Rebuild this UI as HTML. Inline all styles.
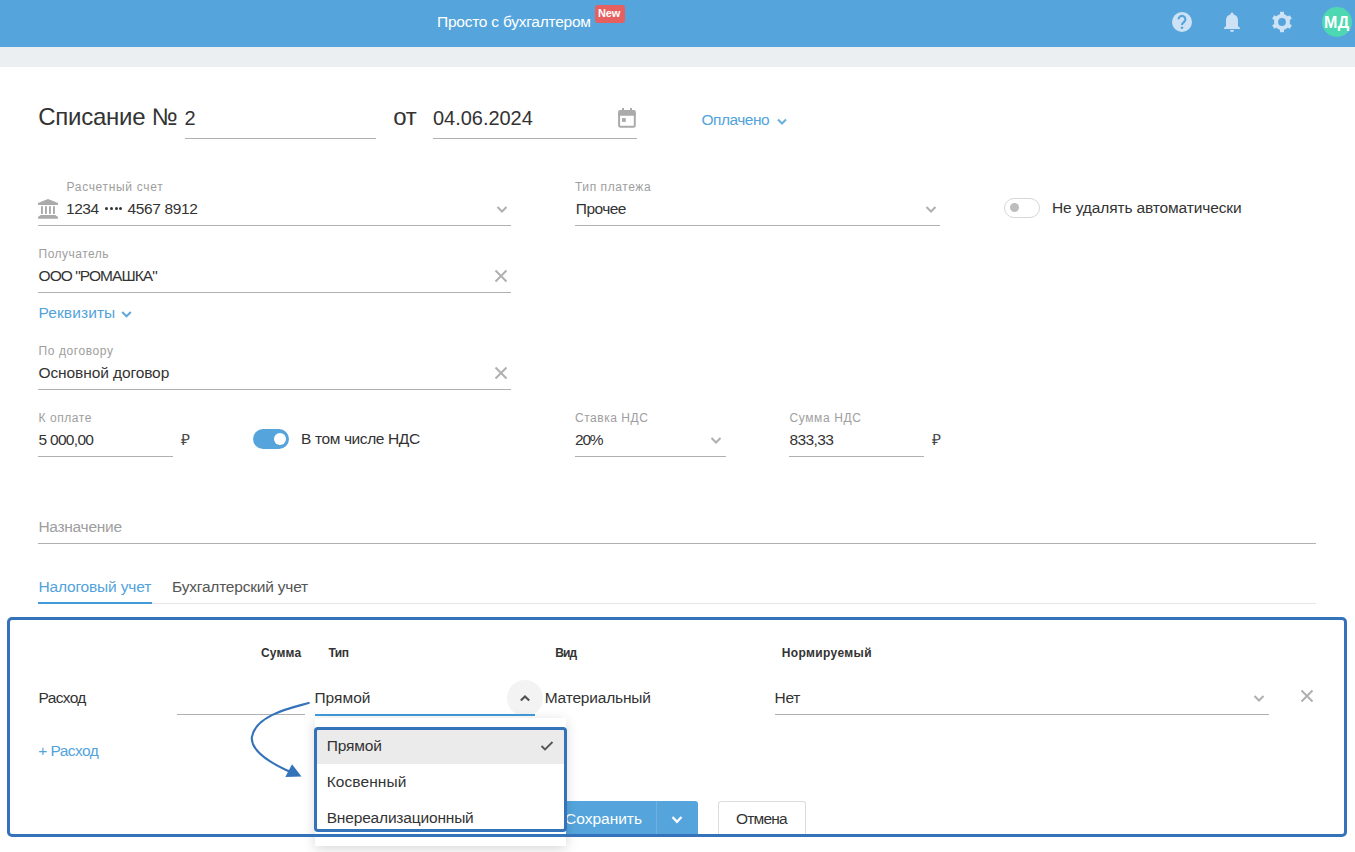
<!DOCTYPE html>
<html><head><meta charset="utf-8"><style>
*{margin:0;padding:0;box-sizing:border-box}
html,body{width:1355px;height:852px;overflow:hidden;background:#fff;font-family:"Liberation Sans",sans-serif}
.t{position:absolute;white-space:nowrap}
.a{position:absolute}
.ul{position:absolute;height:1px;background:#b0b0b0}
</style></head>
<body>

<div class="a" style="left:0;top:0;width:1355px;height:47px;background:#55a5dc"></div>
<div class="a" style="left:0;top:47px;width:1355px;height:20px;background:#eceff1"></div>
<div class="a" style="left:595px;top:5px;width:30px;height:18px;background:#e5605f;border-radius:3px"></div>
<div class="t" style="left:598px;top:7px;font-size:11px;line-height:12px;color:#fff;font-weight:bold;letter-spacing:-0.2px">New</div>

<!-- underlines row1 -->
<div class="ul" style="left:185px;top:138px;width:191px"></div>
<div class="ul" style="left:433px;top:138px;width:204px"></div>
<!-- row2 -->
<div class="ul" style="left:38px;top:225px;width:473px"></div>
<div class="ul" style="left:575px;top:225px;width:365px"></div>
<div class="ul" style="left:38px;top:292px;width:473px"></div>
<div class="ul" style="left:38px;top:389px;width:473px"></div>
<div class="ul" style="left:38px;top:456px;width:135px"></div>
<div class="ul" style="left:575px;top:456px;width:151px"></div>
<div class="ul" style="left:789px;top:456px;width:135px"></div>
<div class="ul" style="left:38px;top:543px;width:1278px"></div>
<!-- tabs -->
<div class="a" style="left:152px;top:603px;width:1164px;height:1px;background:#e6e6e6"></div>
<div class="a" style="left:38px;top:602px;width:114px;height:2px;background:#409bd8"></div>
<!-- table underlines -->
<div class="a" style="left:507px;top:680px;width:36px;height:36px;border-radius:50%;background:#f3f3f3"></div>
<div class="ul" style="left:177px;top:714px;width:128px"></div>
<div class="a" style="left:315px;top:714px;width:220px;height:2px;background:#409bd8"></div>
<div class="ul" style="left:775px;top:714px;width:494px"></div>
<!-- toggles -->
<div class="a" style="left:1004px;top:198px;width:36px;height:20px;border:1px solid #d6d6d6;border-radius:10px"></div>
<div class="a" style="left:1010px;top:203px;width:9px;height:9px;border-radius:50%;background:#bdbdbd"></div>
<div class="a" style="left:253px;top:429px;width:36px;height:20px;border-radius:10px;background:#55a5dc"></div>
<div class="a" style="left:274px;top:433px;width:12px;height:12px;border-radius:50%;background:#fff"></div>
<!-- buttons -->
<div class="a" style="left:540px;top:801px;width:158px;height:35px;background:#55a5dc;border-radius:3px 3px 0 0"></div>
<div class="a" style="left:656px;top:801px;width:1px;height:35px;background:#6db1e2"></div>
<div class="a" style="left:718px;top:801px;width:88px;height:35px;border:1px solid #dcdcdc;border-bottom:none;border-radius:3px 3px 0 0;background:#fff"></div>



<div class="a" style="left:104.5px;top:207px;width:3px;height:3px;border-radius:50%;background:#333"></div><div class="a" style="left:109.5px;top:207px;width:3px;height:3px;border-radius:50%;background:#333"></div><div class="a" style="left:114.5px;top:207px;width:3px;height:3px;border-radius:50%;background:#333"></div><div class="a" style="left:119.4px;top:207px;width:3px;height:3px;border-radius:50%;background:#333"></div>
<!-- chevrons -->
<svg class="a" style="left:776px;top:116px" width="12" height="10" viewBox="0 0 12 10"><path d="M2 3.5 L6 7.5 L10 3.5" fill="none" stroke="#6bb0d8" stroke-width="2.1"/></svg>
<svg class="a" style="left:121px;top:309px" width="11" height="10" viewBox="0 0 11 10"><path d="M1.2 3 L5.5 7.2 L9.8 3" fill="none" stroke="#62a8db" stroke-width="2.1"/></svg>
<svg class="a" style="left:495.5px;top:203.7px" width="12" height="10" viewBox="0 0 12 10"><path d="M1.5 3 L6 7.5 L10.5 3" fill="none" stroke="#b0b0b0" stroke-width="2.1"/></svg>
<svg class="a" style="left:925px;top:204px" width="12" height="10" viewBox="0 0 12 10"><path d="M1.5 3 L6 7.5 L10.5 3" fill="none" stroke="#b0b0b0" stroke-width="2.1"/></svg>
<svg class="a" style="left:710px;top:435.2px" width="12" height="10" viewBox="0 0 12 10"><path d="M1.5 3 L6 7.5 L10.5 3" fill="none" stroke="#b0b0b0" stroke-width="2.1"/></svg>
<svg class="a" style="left:1253px;top:693px" width="12" height="10" viewBox="0 0 12 10"><path d="M1.5 3 L6 7.5 L10.5 3" fill="none" stroke="#b0b0b0" stroke-width="2.1"/></svg>
<svg class="a" style="left:519px;top:692.5px" width="12" height="10" viewBox="0 0 12 10"><path d="M1.8 7.6 L6 3.4 L10.2 7.6" fill="none" stroke="#505050" stroke-width="2.1"/></svg>
<svg class="a" style="left:671px;top:813.5px" width="12" height="10" viewBox="0 0 12 10"><path d="M1.5 3 L6 7.8 L10.5 3" fill="none" stroke="#fff" stroke-width="2.3"/></svg>
<!-- X icons -->
<svg class="a" style="left:494px;top:269px" width="14" height="14" viewBox="0 0 14 14"><path d="M1.5 1.5 L12.5 12.5 M12.5 1.5 L1.5 12.5" stroke="#b0b0b0" stroke-width="2"/></svg>
<svg class="a" style="left:494px;top:366px" width="14" height="14" viewBox="0 0 14 14"><path d="M1.5 1.5 L12.5 12.5 M12.5 1.5 L1.5 12.5" stroke="#b0b0b0" stroke-width="2"/></svg>
<svg class="a" style="left:1300px;top:689px" width="14" height="14" viewBox="0 0 14 14"><path d="M1.5 1.5 L12.5 12.5 M12.5 1.5 L1.5 12.5" stroke="#b0b0b0" stroke-width="2"/></svg>
<!-- calendar -->
<svg class="a" style="left:617px;top:108px" width="20" height="21" viewBox="0 0 20 21"><g fill="#aaaaaa"><rect x="5" y="0" width="2" height="3"/><rect x="13" y="0" width="2" height="3"/><path d="M3.1 2.1 H16.8 A2 2 0 0 1 18.8 4.1 V7.7 H1.1 V4.1 A2 2 0 0 1 3.1 2.1 Z"/><rect x="5" y="10.1" width="3.8" height="3.8"/></g><path d="M2.1 5 V17.2 A1.5 1.5 0 0 0 3.6 18.7 H16.3 A1.5 1.5 0 0 0 17.8 17.2 V5" fill="none" stroke="#aaaaaa" stroke-width="2"/></svg>
<!-- bank -->
<svg class="a" style="left:34px;top:195px" width="28" height="28" viewBox="0 0 28 28"><g fill="#aaaaaa"><path d="M4 8 L14 4 L24 8 V10 H4 Z"/><rect x="7" y="11.2" width="1.9" height="7.7"/><rect x="11" y="11.2" width="1.9" height="7.7"/><rect x="15" y="11.2" width="1.9" height="7.7"/><rect x="19" y="11.2" width="1.9" height="7.7"/><path d="M6.7 20 H21.2 L24 22 V23.7 H4 V22 Z"/></g></svg>
<!-- header icons -->
<svg class="a" style="left:1171px;top:11px" width="22" height="22" viewBox="0 0 22 22"><circle cx="11" cy="11" r="10" fill="#cde2f4"/><path d="M7.6 8.3 a3.4 3.4 0 1 1 5.4 2.7 c-1.2 0.9 -2 1.4 -2 3" fill="none" stroke="#55a5dc" stroke-width="2.2"/><circle cx="11" cy="16.8" r="1.3" fill="#55a5dc"/></svg>
<svg class="a" style="left:1222px;top:11px" width="20" height="22" viewBox="0 0 20 22"><path d="M10 1.5 a1.5 1.5 0 0 1 1.5 1.5 v0.6 a6 6 0 0 1 4.5 5.8 v5.6 l2 2 v1 H2 v-1 l2 -2 v-5.6 a6 6 0 0 1 4.5 -5.8 v-0.6 A1.5 1.5 0 0 1 10 1.5 Z" fill="#cde2f4"/><path d="M8 19 h4 a2 2 0 0 1 -4 0 Z" fill="#cde2f4"/></svg>
<svg class="a" style="left:1270px;top:10px" width="24" height="24" viewBox="-12 -12 24 24"><g fill="#cde2f4"><circle r="8"/><rect x="-2" y="-10.2" width="4" height="4" transform="rotate(0)"/><rect x="-2" y="-10.2" width="4" height="4" transform="rotate(60)"/><rect x="-2" y="-10.2" width="4" height="4" transform="rotate(120)"/><rect x="-2" y="-10.2" width="4" height="4" transform="rotate(180)"/><rect x="-2" y="-10.2" width="4" height="4" transform="rotate(240)"/><rect x="-2" y="-10.2" width="4" height="4" transform="rotate(300)"/></g><circle r="3.9" fill="#55a5dc"/></svg>
<div class="a" style="left:1322px;top:7px;width:30px;height:30px;border-radius:50%;background:#4ed8b1"></div>
<div class="t" style="left:1324px;top:14.8px;font-size:16px;line-height:16px;color:#fff;font-weight:bold;letter-spacing:0.3px">МД</div>

<div id="h_title" class="t" style="left:437.00px;top:13.88px;font-size:15.5px;line-height:15.5px;color:#ffffff;letter-spacing:-0.237px;">Просто с бухгалтером</div>
<div id="t_spis" class="t" style="left:38.20px;top:104.68px;font-size:24px;line-height:24px;color:#333333;letter-spacing:-0.256px;">Списание №</div>
<div id="t_num" class="t" style="left:184.60px;top:108.07px;font-size:20px;line-height:20px;color:#333333;">2</div>
<div id="t_ot" class="t" style="left:393.20px;top:104.68px;font-size:24px;line-height:24px;color:#333333;letter-spacing:-0.200px;">от</div>
<div id="t_date" class="t" style="left:433.00px;top:108.07px;font-size:20px;line-height:20px;color:#333333;letter-spacing:-0.033px;">04.06.2024</div>
<div id="t_paid" class="t" style="left:701.60px;top:111.88px;font-size:15.5px;line-height:15.5px;color:#52a3dc;letter-spacing:-0.529px;">Оплачено</div>
<div id="l_acc" class="t" style="left:66.50px;top:180.84px;font-size:12px;line-height:12px;color:#9e9e9e;letter-spacing:0.677px;">Расчетный счет</div>
<div id="l_type" class="t" style="left:575.00px;top:180.84px;font-size:12px;line-height:12px;color:#9e9e9e;letter-spacing:0.570px;">Тип платежа</div>
<div id="l_rec" class="t" style="left:38.50px;top:247.84px;font-size:12px;line-height:12px;color:#9e9e9e;letter-spacing:0.500px;">Получатель</div>
<div id="l_dog" class="t" style="left:38.50px;top:344.84px;font-size:12px;line-height:12px;color:#9e9e9e;letter-spacing:0.590px;">По договору</div>
<div id="l_pay" class="t" style="left:38.50px;top:411.84px;font-size:12px;line-height:12px;color:#9e9e9e;letter-spacing:0.571px;">К оплате</div>
<div id="l_rate" class="t" style="left:575.00px;top:411.84px;font-size:12px;line-height:12px;color:#9e9e9e;letter-spacing:0.533px;">Ставка НДС</div>
<div id="l_sum" class="t" style="left:789.50px;top:411.84px;font-size:12px;line-height:12px;color:#9e9e9e;letter-spacing:0.600px;">Сумма НДС</div>
<div id="v_acc1" class="t" style="left:66.10px;top:200.88px;font-size:15.5px;line-height:15.5px;color:#333333;letter-spacing:-0.500px;">1234</div>
<div id="v_acc2" class="t" style="left:127.40px;top:200.88px;font-size:15.5px;line-height:15.5px;color:#333333;letter-spacing:-0.338px;">4567 8912</div>
<div id="v_type" class="t" style="left:575.80px;top:200.88px;font-size:15.5px;line-height:15.5px;color:#333333;letter-spacing:-0.560px;">Прочее</div>
<div id="v_auto" class="t" style="left:1052.00px;top:199.88px;font-size:15.5px;line-height:15.5px;color:#333333;letter-spacing:-0.130px;">Не удалять автоматически</div>
<div id="v_rec" class="t" style="left:38.50px;top:267.88px;font-size:15.5px;line-height:15.5px;color:#333333;letter-spacing:-0.925px;">ООО "РОМАШКА"</div>
<div id="v_req" class="t" style="left:38.50px;top:304.88px;font-size:15.5px;line-height:15.5px;color:#52a3dc;letter-spacing:0.100px;">Реквизиты</div>
<div id="v_dog" class="t" style="left:38.50px;top:364.88px;font-size:15.5px;line-height:15.5px;color:#333333;letter-spacing:-0.100px;">Основной договор</div>
<div id="v_pay" class="t" style="left:38.50px;top:431.88px;font-size:15.5px;line-height:15.5px;color:#333333;letter-spacing:-0.700px;">5 000,00</div>
<div id="v_rub1" class="t" style="left:180.60px;top:431.88px;font-size:15.5px;line-height:15.5px;color:#484848;">₽</div>
<div id="v_nds" class="t" style="left:301.10px;top:430.88px;font-size:15.5px;line-height:15.5px;color:#333333;letter-spacing:-0.393px;">В том числе НДС</div>
<div id="v_rate" class="t" style="left:575.00px;top:431.88px;font-size:15.5px;line-height:15.5px;color:#333333;letter-spacing:-1.200px;">20%</div>
<div id="v_sum" class="t" style="left:789.50px;top:431.88px;font-size:15.5px;line-height:15.5px;color:#333333;letter-spacing:-0.620px;">833,33</div>
<div id="v_rub2" class="t" style="left:932.40px;top:431.88px;font-size:15.5px;line-height:15.5px;color:#484848;">₽</div>
<div id="v_purp" class="t" style="left:38.40px;top:518.88px;font-size:15.5px;line-height:15.5px;color:#9e9e9e;letter-spacing:-0.278px;">Назначение</div>
<div id="tab1" class="t" style="left:38.40px;top:578.88px;font-size:15.5px;line-height:15.5px;color:#52a3dc;letter-spacing:-0.162px;">Налоговый учет</div>
<div id="tab2" class="t" style="left:172.10px;top:578.88px;font-size:15.5px;line-height:15.5px;color:#555555;letter-spacing:-0.212px;">Бухгалтерский учет</div>
<div id="th_sum" class="t" style="left:261.00px;top:646.84px;font-size:12px;line-height:12px;color:#333333;letter-spacing:0.150px;font-weight:bold;">Сумма</div>
<div id="th_type" class="t" style="left:328.40px;top:646.84px;font-size:12px;line-height:12px;color:#333333;letter-spacing:-0.450px;font-weight:bold;">Тип</div>
<div id="th_vid" class="t" style="left:555.20px;top:646.84px;font-size:12px;line-height:12px;color:#333333;letter-spacing:-0.850px;font-weight:bold;">Вид</div>
<div id="th_norm" class="t" style="left:781.70px;top:646.84px;font-size:12px;line-height:12px;color:#333333;letter-spacing:0.370px;font-weight:bold;">Нормируемый</div>
<div id="r_ras" class="t" style="left:38.60px;top:689.88px;font-size:15.5px;line-height:15.5px;color:#333333;letter-spacing:-0.660px;">Расход</div>
<div id="r_pr" class="t" style="left:314.40px;top:689.88px;font-size:15.5px;line-height:15.5px;color:#333333;letter-spacing:0.040px;">Прямой</div>
<div id="r_mat" class="t" style="left:544.70px;top:689.88px;font-size:15.5px;line-height:15.5px;color:#333333;letter-spacing:-0.191px;">Материальный</div>
<div id="r_net" class="t" style="left:774.60px;top:689.88px;font-size:15.5px;line-height:15.5px;color:#333333;letter-spacing:-0.300px;">Нет</div>
<div id="r_add" class="t" style="left:38.20px;top:742.88px;font-size:15.5px;line-height:15.5px;color:#52a3dc;letter-spacing:-0.557px;">+ Расход</div>
<div id="b_save" class="t" style="left:565.00px;top:810.88px;font-size:15.5px;line-height:15.5px;color:#ffffff;">Сохранить</div>
<div id="b_cancel" class="t" style="left:736.00px;top:810.88px;font-size:15.5px;line-height:15.5px;color:#333333;letter-spacing:-0.800px;">Отмена</div>

<!-- dropdown panel -->
<div class="a" style="left:315px;top:718px;width:251px;height:128px;background:#fff;box-shadow:0 3px 12px rgba(0,0,0,0.16)"></div>
<div class="a" style="left:317px;top:729px;width:248px;height:35px;background:#ebebeb"></div>
<div id="dd1" class="t" style="left:326.70px;top:737.88px;font-size:15.5px;line-height:15.5px;color:#333333;letter-spacing:-0.160px;">Прямой</div>
<div id="dd2" class="t" style="left:326.70px;top:773.88px;font-size:15.5px;line-height:15.5px;color:#333333;letter-spacing:0.087px;">Косвенный</div>
<div id="dd3" class="t" style="left:326.70px;top:809.88px;font-size:15.5px;line-height:15.5px;color:#333333;letter-spacing:-0.175px;">Внереализационный</div>
<svg class="a" style="left:540px;top:740px" width="14" height="12" viewBox="0 0 14 12"><path d="M1.5 6 L5 9.5 L12.5 2" fill="none" stroke="#555" stroke-width="1.8"/></svg>
<!-- annotation: outer border -->
<div class="a" style="left:7px;top:617px;width:1340px;height:220px;border:3px solid #3473ba;border-radius:5px"></div>
<!-- annotation: dropdown highlight -->
<div class="a" style="left:314px;top:727px;width:253px;height:105px;border:3px solid #3473ba;border-radius:4px"></div>
<!-- annotation arrow -->
<svg class="a" style="left:0;top:0" width="1355" height="852"><path d="M309.5 702.4 C 307.8 705.0, 256.1 711.0, 251.8 737.3 C 250.7 756.0, 288.6 771.3, 291.8 772.2" fill="none" stroke="#3473ba" stroke-width="2.1"/><path d="M285.3 777 L301.5 776.6 L292 764.3 Z" fill="#3473ba"/></svg>

</body></html>
